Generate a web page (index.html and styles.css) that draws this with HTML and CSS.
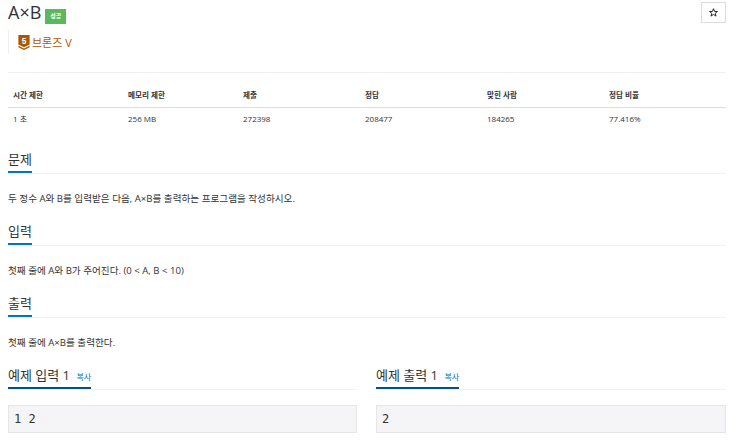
FILE: index.html
```html
<!DOCTYPE html>
<html lang="ko">
<head>
<meta charset="utf-8">
<title>A×B</title>
<link rel="stylesheet" href="styles.css">
</head>
<body>
<div class="page">
  <header class="top">
    <div class="title-line">
      <h1 class="title">A×B</h1>
      <span class="badge">성공</span>
    </div>
    <button class="star"><svg width="9" height="9" viewBox="0 0 10 10"><path d="M5 .8 6.2 3.8 9.4 3.9 6.9 5.9 7.8 9 5 7.2 2.2 9 3.1 5.9.6 3.9 3.8 3.8Z" fill="none" stroke="#222" stroke-width="1.1"/></svg></button>
  </header>
  <div class="tier">
    <svg class="tier-icon" width="12" height="15" viewBox="0 0 12 16">
      <path d="M0 0H12V10L6 13L0 10Z" fill="#ad5600"/>
      <path d="M0 11.5L6 14.5L12 11.5V13L6 16L0 13Z" fill="#ad5600"/>
      <text x="6" y="9.5" class="tier-num" text-anchor="middle">5</text>
    </svg>
    <span>브론즈 V</span>
  </div>
  <div class="stats">
    <div class="cell head">시간 제한</div>
    <div class="cell head">메모리 제한</div>
    <div class="cell head">제출</div>
    <div class="cell head">정답</div>
    <div class="cell head">맞힌 사람</div>
    <div class="cell head">정답 비율</div>
    <div class="cell">1 초</div>
    <div class="cell">256 MB</div>
    <div class="cell">272398</div>
    <div class="cell">208477</div>
    <div class="cell">184265</div>
    <div class="cell">77.416%</div>
  </div>
  <section class="section">
    <div class="headline"><h2>문제</h2></div>
    <p class="body-text">두 정수 A와 B를 입력받은 다음, A×B를 출력하는 프로그램을 작성하시오.</p>
  </section>
  <section class="section">
    <div class="headline"><h2>입력</h2></div>
    <p class="body-text">첫째 줄에 A와 B가 주어진다. (0 &lt; A, B &lt; 10)</p>
  </section>
  <section class="section">
    <div class="headline"><h2>출력</h2></div>
    <p class="body-text">첫째 줄에 A×B를 출력한다.</p>
  </section>
  <div class="samples">
    <section>
      <div class="headline"><h2>예제 입력 1 <a class="copy">복사</a></h2></div>
      <pre class="sample">1 2</pre>
    </section>
    <section>
      <div class="headline"><h2>예제 출력 1 <a class="copy">복사</a></h2></div>
      <pre class="sample">2</pre>
    </section>
  </div>
</div>
</body>
</html>
```
FILE: styles.css
```css
html, body {
  margin: 0;
  padding: 0;
  background: #fff;
  overflow: hidden;
}
body {
  font-family: "Open Sans", "Noto Sans CJK KR", sans-serif;
  color: #333;
  font-size: 9px;
}
.page {
  width: 718px;
  margin-left: 8px;
}
.top {
  display: flex;
  justify-content: space-between;
  align-items: flex-start;
  height: 30px;
}
.title-line {
  display: flex;
  align-items: flex-start;
  gap: 4px;
  height: 30px;
}
.title {
  margin: 0;
  font-weight: 400;
  font-size: 18px;
  line-height: 25px;
  color: #333;
}
.badge {
  background: #5cb85c;
  color: #fff;
  font-size: 6px;
  font-weight: 700;
  line-height: 15px;
  width: 21px;
  text-align: center;
  margin-top: 9px;
}
.star {
  display: flex;
  align-items: center;
  justify-content: center;
  width: 25px;
  height: 21px;
  margin: 2px 0 0;
  padding: 0;
  background: #fff;
  border: 1px solid #ddd;
}
.tier {
  display: flex;
  align-items: center;
  gap: 2px;
  height: 24px;
  padding-left: 9px;
  border-left: 1px solid #eee;
  color: #ad5600;
  font-size: 11px;
}
.tier-num {
  fill: #fff;
  font: 700 9px "Liberation Sans", sans-serif;
}
.stats {
  display: grid;
  grid-template-columns: 115px 115px 122px 122px 122px 122px;
  margin-top: 18px;
  margin-bottom: 15px;
  padding-top: 11px;
  border-top: 1px solid #eee;
}
.cell {
  padding-left: 5px;
  line-height: 22px;
  height: 22px;
  color: #333;
  font-size: 8px;
}
.head {
  font-size: 7.6px;
  font-weight: 700;
  border-bottom: 1px solid #ddd;
  height: 23px;
}
.headline {
  border-bottom: 1px solid #f2f2f2;
  height: 28px;
}
.headline h2 {
  display: inline-block;
  margin: 0;
  height: 26px;
  font-weight: 400;
  font-size: 13px;
  line-height: 28px;
  color: #333;
  border-bottom: 2px solid #0076c0;
}
.body-text {
  margin: 0;
  padding-top: 6px;
  font-size: 9.6px;
  line-height: 37px;
  height: 37px;
  color: #333;
}
.samples {
  display: grid;
  grid-template-columns: 349px 350px;
  column-gap: 19px;
}
.samples .headline h2 {
  border-bottom-color: #00508f;
}
.copy {
  font-size: 8px;
  color: #0076c0;
  margin-left: 3px;
}
.sample {
  margin: 15px 0 0;
  height: 28px;
  box-sizing: border-box;
  padding-left: 5px;
  font-family: "DejaVu Sans Mono", monospace;
  font-size: 12px;
  line-height: 26px;
  background: #f5f5f7;
  border: 1px solid #e6e6e6;
  color: #333;
}
```
